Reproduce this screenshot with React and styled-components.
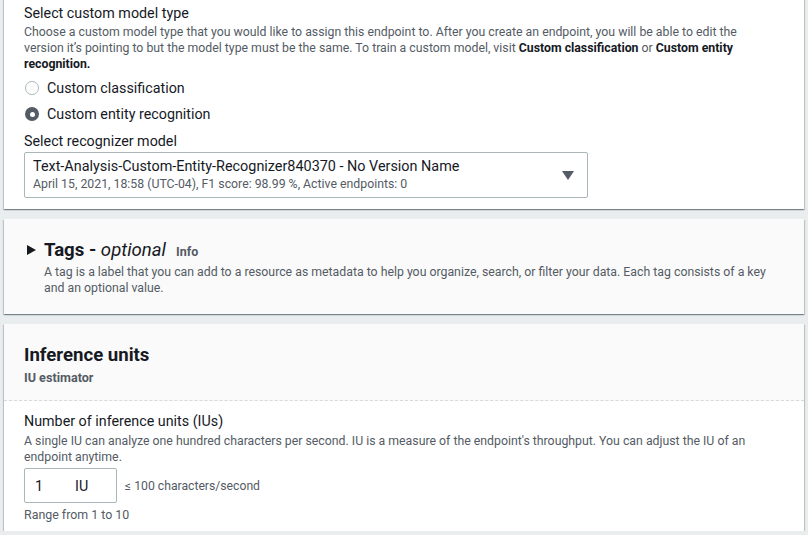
import React from "react";
import styled, { createGlobalStyle } from "styled-components";

const GlobalStyle = createGlobalStyle`
  html, body { margin: 0; padding: 0; }
  body {
    background: #eaeded;
    font-family: Roboto, "Noto Sans", "Liberation Sans", sans-serif;
    color: #16191f;
    -webkit-font-smoothing: antialiased;
  }
`;

const Page = styled.div`
  display: flex;
  flex-direction: column;
  gap: 10px;
  padding: 0 4px 0 4px;
  width: 800px;
`;

const Card = styled.section`
  background: ${(p) => (p.$muted ? "#fafafa" : "#ffffff")};
  box-shadow: 0 1px 1px 0 rgba(0, 28, 36, 0.3), 1px 1px 1px 0 rgba(0, 28, 36, 0.15),
    -1px 1px 1px 0 rgba(0, 28, 36, 0.15);
  margin-top: ${(p) => p.$offset || 0}px;
`;

const CardBody = styled.div`
  display: flex;
  flex-direction: column;
  padding: ${(p) => p.$pad};
`;

const Label = styled.div`
  font-size: 14.3px;
  line-height: 20px;
  color: #16191f;
  margin-top: ${(p) => p.$mt || 0}px;
`;

const Desc = styled.p`
  margin: ${(p) => p.$mt || 0}px 0 0 0;
  font-size: 12.3px;
  line-height: 16px;
  color: #545b64;
  max-width: ${(p) => p.$mw || 740}px;
  b { color: #16191f; font-weight: 700; }
`;

const RadioGroup = styled.div`
  display: flex;
  flex-direction: column;
  margin-top: 3px;
`;

const RadioRow = styled.label`
  display: flex;
  align-items: center;
  gap: 8px;
  height: 26px;
  font-size: 14.3px;
  color: #16191f;
  padding-left: 1px;
`;

const RadioDot = styled.span`
  box-sizing: border-box;
  width: 14px;
  height: 14px;
  border-radius: 50%;
  background: ${(p) => (p.$on ? "#545b64" : "#ffffff")};
  border: ${(p) => (p.$on ? "none" : "1px solid #aab7b8")};
  display: flex;
  align-items: center;
  justify-content: center;
  &::after {
    content: "";
    display: ${(p) => (p.$on ? "block" : "none")};
    width: 5px;
    height: 5px;
    border-radius: 50%;
    background: #ffffff;
  }
`;

const SelectBox = styled.div`
  box-sizing: border-box;
  margin-top: 1px;
  width: 564px;
  height: 46px;
  border: 1px solid #aab7b8;
  border-radius: 2px;
  display: flex;
  align-items: center;
  justify-content: space-between;
  padding: 0 10px 0 8px;
  background: #fff;
`;

const SelectText = styled.div`
  display: flex;
  flex-direction: column;
`;

const SelectTitle = styled.div`
  font-size: 14.4px;
  line-height: 18px;
  color: #16191f;
`;

const SelectSub = styled.div`
  font-size: 12.3px;
  line-height: 16px;
  color: #545b64;
`;

const Caret = styled.span`
  width: 0;
  height: 0;
  border-left: 6px solid transparent;
  border-right: 6px solid transparent;
  border-top: 9px solid #545b64;
  margin-right: 3px;
`;

const ExpandHeader = styled.div`
  display: flex;
  align-items: center;
  height: 24px;
`;

const Triangle = styled.span`
  width: 0;
  height: 0;
  border-top: 5.5px solid transparent;
  border-bottom: 5.5px solid transparent;
  border-left: 9px solid #16191f;
  margin: 0 8px 0 3px;
`;

const Heading = styled.h2`
  margin: 0;
  font-size: 18.6px;
  line-height: 24px;
  font-weight: 700;
  color: #16191f;
  em { font-style: italic; font-weight: 400; }
`;

const InfoLink = styled.span`
  font-size: 12.5px;
  font-weight: 700;
  color: #545b64;
  margin-left: 10px;
  margin-top: 3px;
`;

const Indented = styled.div`
  padding-left: 20px;
`;

const HeaderArea = styled.div`
  display: flex;
  flex-direction: column;
  padding: 19px 20px 14px;
  background: #fafafa;
  border-bottom: 1px dashed #d5dbdb;
`;

const SubHead = styled.div`
  font-size: 12.6px;
  font-weight: 700;
  line-height: 16px;
  color: #545b64;
  margin-top: 3px;
`;

const InputRow = styled.div`
  display: flex;
  align-items: center;
  gap: 8px;
  margin-top: 3px;
`;

const NumberInput = styled.div`
  box-sizing: border-box;
  width: 93px;
  height: 35px;
  border: 1px solid #aab7b8;
  border-radius: 2px;
  display: flex;
  align-items: center;
  padding-left: 10px;
  font-size: 14.3px;
  color: #16191f;
  gap: 32px;
`;

const Hint = styled.span`
  font-size: 12.2px;
  color: #545b64;
`;

const Constraint = styled.div`
  margin-top: 4px;
  font-size: 12.4px;
  line-height: 16px;
  color: #545b64;
`;

export default function App() {
  return (
    <>
      <GlobalStyle />
      <Page>
        <Card $offset={-2}>
          <CardBody $pad="5px 20px 11px">
            <Label>Select custom model type</Label>
            <Desc $mt={1}>
              Choose a custom model type that you would like to assign this endpoint to. After you create an
              endpoint, you will be able to edit the version it’s pointing to but the model type must be the
              same. To train a custom model, visit <b>Custom classification</b> or <b>Custom entity recognition.</b>
            </Desc>
            <RadioGroup>
              <RadioRow>
                <RadioDot />
                Custom classification
              </RadioRow>
              <RadioRow>
                <RadioDot $on />
                Custom entity recognition
              </RadioRow>
            </RadioGroup>
            <Label $mt={4}>Select recognizer model</Label>
            <SelectBox>
              <SelectText>
                <SelectTitle>Text-Analysis-Custom-Entity-Recognizer840370 - No Version Name</SelectTitle>
                <SelectSub>April 15, 2021, 18:58 (UTC-04), F1 score: 98.99 %, Active endpoints: 0</SelectSub>
              </SelectText>
              <Caret />
            </SelectBox>
          </CardBody>
        </Card>

        <Card $muted>
          <CardBody $pad="19px 20px 18px">
            <ExpandHeader>
              <Triangle />
              <Heading>
                Tags - <em>optional</em>
              </Heading>
              <InfoLink>Info</InfoLink>
            </ExpandHeader>
            <Indented>
              <Desc $mt={2}>
                A tag is a label that you can add to a resource as metadata to help you organize, search, or filter
                your data. Each tag consists of a key and an optional value.
              </Desc>
            </Indented>
          </CardBody>
        </Card>

        <Card>
          <HeaderArea>
            <Heading>Inference units</Heading>
            <SubHead>IU estimator</SubHead>
          </HeaderArea>
          <CardBody $pad="10px 20px 8px">
            <Label>Number of inference units (IUs)</Label>
            <Desc $mt={2}>
              A single IU can analyze one hundred characters per second. IU is a measure of the endpoint's
              throughput. You can adjust the IU of an endpoint anytime.
            </Desc>
            <InputRow>
              <NumberInput>
                <span>1</span>
                <span>IU</span>
              </NumberInput>
              <Hint>≤ 100 characters/second</Hint>
            </InputRow>
            <Constraint>Range from 1 to 10</Constraint>
          </CardBody>
        </Card>
      </Page>
    </>
  );
}
